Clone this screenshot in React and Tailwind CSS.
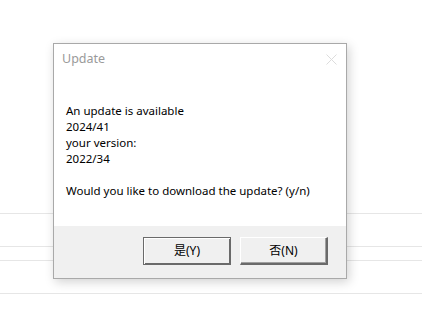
import React from "react";

const font = { fontFamily: '"Noto Sans", "Noto Sans CJK SC", sans-serif' };

// Classic Win32-style push button
const DialogButton = ({ label, primary }) => (
  <button
    className={`w-[88px] h-[28px] bg-[#f0f0f0] text-[12px] text-black flex items-center justify-center ${
      primary
        ? "border border-[#6a6a6a] shadow-[inset_1px_1px_0_#ffffff,inset_-1px_-1px_0_#6a6a6a]"
        : "border-t border-l border-t-white border-l-white border-b-2 border-r-2 border-b-[#6a6a6a] border-r-[#6a6a6a] shadow-[inset_-1px_-1px_0_#a0a0a0]"
    }`}
  >
    {label}
  </button>
);

export default function App() {
  return (
    <div className="relative w-[422px] h-[332px] bg-white overflow-hidden" style={font}>
      {/* background list lines */}
      <div className="flex flex-col pt-[213px]">
        <div className="h-px bg-[#e6e6e6]" />
        <div className="h-px bg-[#e6e6e6] mt-[32px]" />
        <div className="h-px bg-[#e6e6e6] mt-[13px]" />
        <div className="h-px bg-[#e6e6e6] mt-[32px]" />
      </div>

      {/* message box */}
      <div className="absolute left-[53px] top-[43px] w-[294px] h-[236px] bg-white border border-[#a9a9a9] shadow-[2px_3px_10px_rgba(0,0,0,0.18)] flex flex-col">
        <div className="h-[30px] flex items-center justify-between pl-[8px] pr-[9px]">
          <span className="text-[12.5px] text-[#9a9a9a] pt-[1px]">Update</span>
          <svg width="11" height="11" viewBox="0 0 11 11" className="mt-[1px]">
            <path d="M0.5 0.5 L10.5 10.5 M10.5 0.5 L0.5 10.5" stroke="#dcdcdc" strokeWidth="1" fill="none" />
          </svg>
        </div>
        <div className="flex-1 pl-[12px] pt-[29px] text-[11.5px] leading-[16px] text-black">
          <div>An update is available</div>
          <div>2024/41</div>
          <div>your version:</div>
          <div>2022/34</div>
          <div className="h-[16px]" />
          <div>Would you like to download the update? (y/n)</div>
        </div>
        <div className="h-[52px] bg-[#f0f0f0] flex items-start justify-end gap-[9px] pt-[11px] pr-[18px]">
          <DialogButton label="是(Y)" primary />
          <DialogButton label="否(N)" />
        </div>
      </div>
    </div>
  );
}
